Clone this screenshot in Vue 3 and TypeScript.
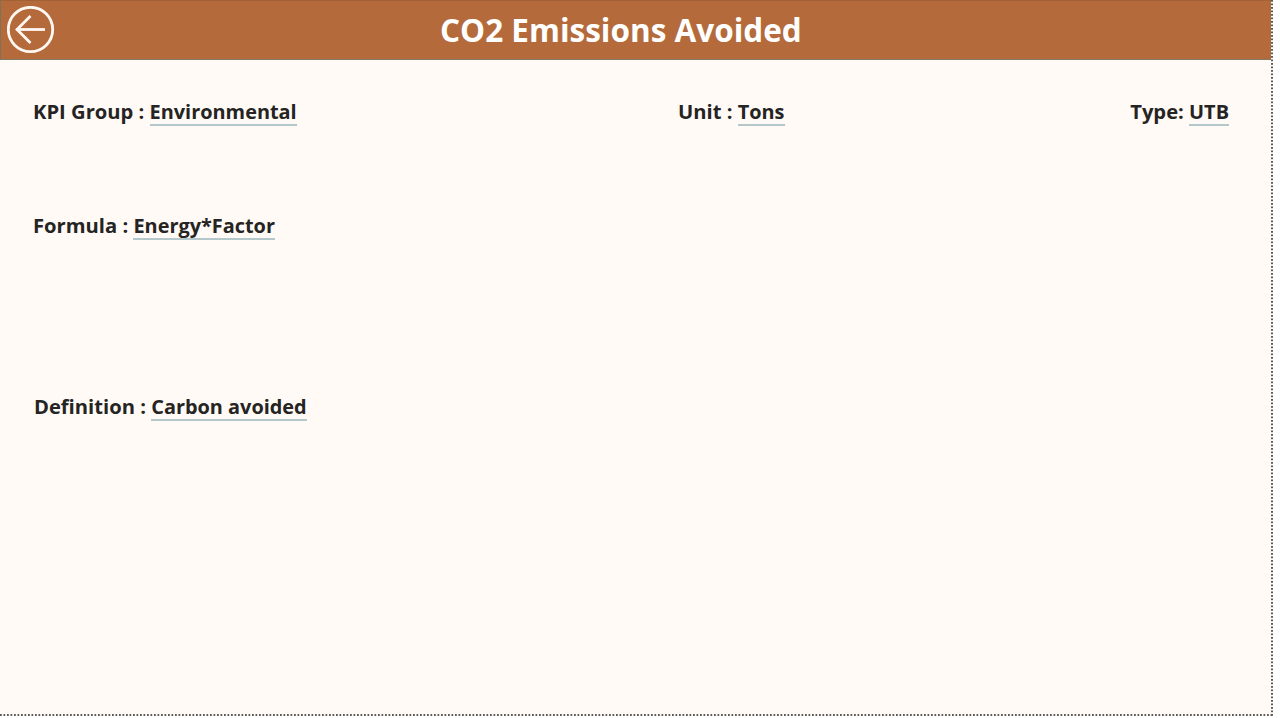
<template>
  <div class="page">
    <header class="title-bar">
      <button class="back-button" type="button" aria-label="Back">
        <svg width="48" height="48" viewBox="0 0 48 48" fill="none" stroke="#fff8f2" stroke-width="2.8">
          <circle cx="23.5" cy="23.5" r="22.2" />
          <path d="M9.500 23.500H38" />
          <path d="M23.500 10L10 23.500L23.500 37" />
        </svg>
      </button>
      <h1 class="title">{{ kpi.name }}</h1>
    </header>

    <main class="details">
      <section class="row row-top">
        <p class="field">KPI Group : <span class="value">{{ kpi.group }}</span></p>
        <p class="field">Unit : <span class="value">{{ kpi.unit }}</span></p>
        <p class="field">Type: <span class="value">{{ kpi.type }}</span></p>
      </section>
      <section class="row row-formula">
        <p class="field">Formula : <span class="value">{{ kpi.formula }}</span></p>
      </section>
      <section class="row row-definition">
        <p class="field">Definition : <span class="value">{{ kpi.definition }}</span></p>
      </section>
    </main>
  </div>
</template>

<script setup lang="ts">
const kpi = {
  name: 'CO2 Emissions Avoided',
  group: 'Environmental',
  unit: 'Tons',
  type: 'UTB',
  formula: 'Energy*Factor',
  definition: 'Carbon avoided'
}
</script>

<style scoped>
.page {
  width: 1273px;
  height: 716px;
  box-sizing: border-box;
  padding: 0 2px 2px 0;
  background:
    linear-gradient(90deg, #5a5a5a 55%, transparent 55%) left bottom / 3.5px 2px repeat-x,
    linear-gradient(180deg, #5a5a5a 55%, transparent 55%) right top / 2px 3.5px repeat-y,
    #fffaf6;
  font-family: 'Open Sans', 'Liberation Sans', sans-serif;
  color: #252423;
}

.title-bar {
  height: 60px;
  box-sizing: border-box;
  background: #b46a3a;
  border-left: 1px solid #7d7458;
  border-bottom: 1px solid #857a62;
  border-top: 1px solid #a26238;
  display: flex;
  align-items: center;
  padding-left: 6px;
}

.back-button {
  width: 48px;
  height: 48px;
  padding: 0;
  background: none;
  border: none;
  display: block;
}

.back-button svg {
  display: block;
}

.title {
  flex: 1;
  margin: 0;
  padding-left: 385px;
  font-size: 31.5px;
  line-height: 40px;
  font-weight: 700;
  color: #fff;
  white-space: nowrap;
}

.details {
  padding: 0 42px 0 33px;
}

.row {
  display: grid;
}

.row-top {
  grid-template-columns: 645px 1fr auto;
  padding-top: 37px;
}

.row-formula {
  padding-top: 85px;
}

.row-definition {
  padding-top: 152px;
  padding-left: 1px;
}

.field {
  margin: 0;
  font-size: 20.2px;
  line-height: 28px;
  font-weight: 700;
  white-space: nowrap;
}

.value {
  display: inline-block;
  font-size: 19.9px;
  line-height: 25px;
  border-bottom: 2px solid #b4c8cc;
}
</style>
